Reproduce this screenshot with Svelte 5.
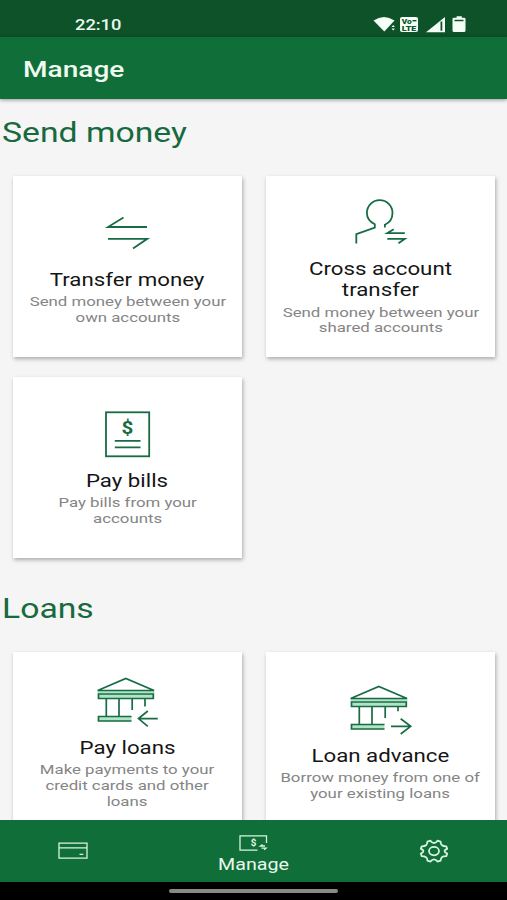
<script>
  const sections = [
    {
      title: 'Send money',
      cards: [
        { icon: 'transfer', title: ['Transfer money'], text: ['Send money between your', 'own accounts'] },
        { icon: 'person', title: ['Cross account', 'transfer'], text: ['Send money between your', 'shared accounts'] },
        { icon: 'bill', title: ['Pay bills'], text: ['Pay bills from your', 'accounts'] }
      ]
    },
    {
      title: 'Loans',
      cards: [
        { icon: 'bankIn', title: ['Pay loans'], text: ['Make payments to your', 'credit cards and other', 'loans'] },
        { icon: 'bankOut', title: ['Loan advance'], text: ['Borrow money from one of', 'your existing loans'] }
      ]
    }
  ];
</script>

<div class="screen">
  <div class="status">
    <span class="wide time">22:10</span>
    <svg class="indicators" width="96" height="20" viewBox="0 0 96 20">
      <g fill="#f4fff6">
        <path d="M.5 5.6Q11 -1.8 21.5 5.6L11.3 16.5Z" />
        <path d="M18.5 12l1.7-2 1.7 2zM18.5 13.5h3.4l-1.7 2z" />
        <rect x="27" y="2" width="18" height="15" rx="2" />
        <path d="M53 17.2L72 2v15.2Z" />
        <path d="M79.5 4q0-1.3 1.5-1.3h2.6V1.2h5.2v1.5H91q1.5 0 1.5 1.3v11.5q0 1.5-1.5 1.5H81q-1.5 0-1.5-1.5Z" />
      </g>
      <g fill="#0d5229" font-family="Roboto, sans-serif" font-weight="900">
        <text x="28.8" y="8.6" font-size="6.4" textLength="10" lengthAdjust="spacingAndGlyphs">Vo</text>
        <text x="28.8" y="16.1" font-size="6.4" textLength="14.5" lengthAdjust="spacingAndGlyphs">LTE</text>
        <path d="M39.5 5h4v1.4h-4z" />
        <path d="M67.5 6.5h1.8v9.2h-1.8zM81.5 4.7h9v1.6h-9z" />
      </g>
    </svg>
  </div>
  <header><h1 class="wide">Manage</h1></header>

  <main>
    {#each sections as section}
      <section>
        <h2><span class="wide">{section.title}</span></h2>
        <div class="grid">
          {#each section.cards as card}
            <article>
              <svg class="icon" width="82" height="61" viewBox="0 0 82 61">
                {#if card.icon === 'transfer'}
                  <path d="M60 19H21L36.5 9.5M21 30.8H60.3L46 40.6" />
                {:else if card.icon === 'person'}
                  <path d="M44.9 30.4V27.7Q52.5 24.3 52.5 16A12.8 12.8 0 0 0 26.9 16Q26.9 23.5 34.8 27.2V30.5L16.3 37.2V46.6" />
                  <path d="M64.8 36.2H47.3L53.7 32.3M47.3 41.8H64.8L58.5 46.2" />
                {:else if card.icon === 'bill'}
                  <rect x="19" y="3.3" width="43.2" height="44" />
                  <text x="34.5" y="25" textLength="11.8" lengthAdjust="spacingAndGlyphs">$</text>
                  <path d="M27.8 31.8H53.5M27.8 38.3H53.5" />
                {:else}
                  {@const inward = card.icon === 'bankIn'}
                  <g class="bank">
                    <path class="roofbase" d="M10.5 14.2H67.5V17.5H10.5Z" />
                    <path d="M10.7 14.5L38.8 2.5L67 14.5Z" />
                    <path class="tint" d="M11.5 18H66.3V22.5H11.5Z" />
                    <path d="M19.3 23V40M32 23V40M45.2 23V34" />
                    <path d={inward ? 'M58 23V30.5' : 'M58 23V27.3'} />
                    <path class="tint" d="M44.5 40.5H11.5V45H44.5" />
                    {#if inward}
                      <path d="M70.8 42.6H51.5M60.8 35L51.5 42.6L60.8 50.4" />
                    {:else}
                      <path d="M51 42.3H70.7M60.7 34.7L70.7 42.3L60.7 50" />
                    {/if}
                  </g>
                {/if}
              </svg>
              <h3>{#each card.title as line}<span class="wide line">{line}</span>{/each}</h3>
              <p>{#each card.text as line}<span class="wide line">{line}</span>{/each}</p>
            </article>
          {/each}
        </div>
      </section>
    {/each}
  </main>

  <nav>
    <div class="tab">
      <svg width="32" height="20" viewBox="0 0 32 20">
        <path d="M2 2.2H30V17.2H2ZM2 6.8H30M22.5 13.4H26.3" />
      </svg>
    </div>
    <div class="tab active">
      <svg width="34" height="18" viewBox="0 0 34 18">
        <path d="M20.5 16.2H3V1.8H29.5V9" />
        <text x="13.8" y="12.4" textLength="5.6" lengthAdjust="spacingAndGlyphs">$</text>
        <path d="M28 12H23.5L25.6 10.6M24.5 14.2H29L27.2 15.7" />
      </svg>
      <span class="wide">Manage</span>
    </div>
    <div class="tab">
      <svg class="gear" width="32" height="26" viewBox="0 0 32 26">
        <path d="M12.5 2.7Q14 5 16 5T19.5 2.7L22.6 3.7Q22.5 6.2 24 7.3T28.3 8.3L29.2 10.8Q26.6 11.6 26.6 13.1T29.2 15.5L28.3 18.1Q25.3 18 24 19.2T22.6 22.6L19.5 23.6Q18 21.3 16 21.3T12.5 23.6L9.4 22.6Q9.5 20.2 8 19.2T3.7 18.1L2.8 15.5Q5.4 14.6 5.4 13.1T2.8 10.8L3.7 8.3Q6.7 8.4 8 7.3T9.4 3.7Z" />
        <ellipse cx="16" cy="13.1" rx="5" ry="4.2" />
      </svg>
    </div>
  </nav>
  <div class="system"><i></i></div>
</div>

<style>
  :global(body) { margin: 0; background: #000; }
  .screen {
    width: 507px;
    height: 900px;
    display: flex;
    flex-direction: column;
    overflow: hidden;
    background: #f5f5f5;
    font-family: Roboto, sans-serif;
  }
  h1, h2, h3, p { margin: 0; font-weight: 400; }
  /* Extended letterforms */
  .wide { display: inline-block; white-space: nowrap; transform: scaleX(1.245); transform-origin: left center; }
  .line { display: block; transform-origin: center; }
  .status {
    height: 37px;
    flex: none;
    box-sizing: border-box;
    padding: 12px 38px 0 75px;
    display: flex;
    justify-content: space-between;
    align-items: center;
    background: #0d5229;
    color: #edf9ef;
  }
  .time { font-size: 14.7px; font-weight: 500; line-height: 20px; }
  .indicators { display: block; }
  header {
    height: 61.5px;
    flex: none;
    box-sizing: border-box;
    padding: 4px 0 0 23px;
    display: flex;
    align-items: center;
    background: #106e39;
    color: #effbf0;
    box-shadow: 0 1px 4px rgba(0, 0, 0, .4);
    z-index: 1;
  }
  h1 { font-size: 22px; font-weight: 500; line-height: 28px; }
  h1.wide { transform: scaleX(1.275); }
  main { flex: 1; min-height: 0; overflow: hidden; }
  section { height: 476px; }
  h2 {
    height: 77px;
    box-sizing: border-box;
    padding: 18px 0 0 2px;
    font-size: 27.3px;
    line-height: 32px;
    color: #166a3d;
  }
  h2 .wide { transform: scaleX(1.235); }
  .grid { display: grid; grid-template-columns: 229px 229px; gap: 20px 24px; padding-left: 13px; }
  article {
    height: 181px;
    display: flex;
    flex-direction: column;
    align-items: center;
    justify-content: center;
    background: #fff;
    box-shadow: 1px 2px 4px rgba(0, 0, 0, .3);
    text-align: center;
  }
  .icon { display: block; flex: none; fill: none; stroke: #176c43; stroke-width: 1.8; }
  .icon text { fill: #176c43; stroke: none; font-size: 18px; font-weight: 700; }
  .bank { stroke-width: 1.7; }
  .bank .tint { fill: #b1e3c7; }
  .bank .roofbase { fill: #b1e3c7; stroke: none; }
  h3 { font-size: 17.9px; line-height: 21px; color: #151515; }
  p { padding-top: 4.5px; margin-bottom: -1px; font-size: 13.5px; line-height: 15.7px; color: #858585; }
  nav {
    height: 62px;
    flex: none;
    display: grid;
    grid-template-columns: 146px 215px 146px;
    background: #106e39;
    color: #e9f8ec;
    z-index: 1;
  }
  .tab { display: flex; flex-direction: column; align-items: center; justify-content: center; }
  .tab svg { display: block; fill: none; stroke: #d8f3df; stroke-width: 1.3; }
  .tab text { fill: #e6faea; stroke: none; font-size: 9.5px; font-weight: 700; }
  .tab .gear { stroke-width: 1.8; stroke-linejoin: round; }
  .active { padding-top: 6px; }
  .active .wide { font-size: 15.8px; line-height: 20px; margin-top: 3px; transform-origin: center; }
  .system { height: 18px; flex: none; display: flex; justify-content: center; align-items: center; background: #000; }
  .system i { width: 169px; height: 4px; margin-top: -1px; border-radius: 2px; background: #898989; }
</style>
